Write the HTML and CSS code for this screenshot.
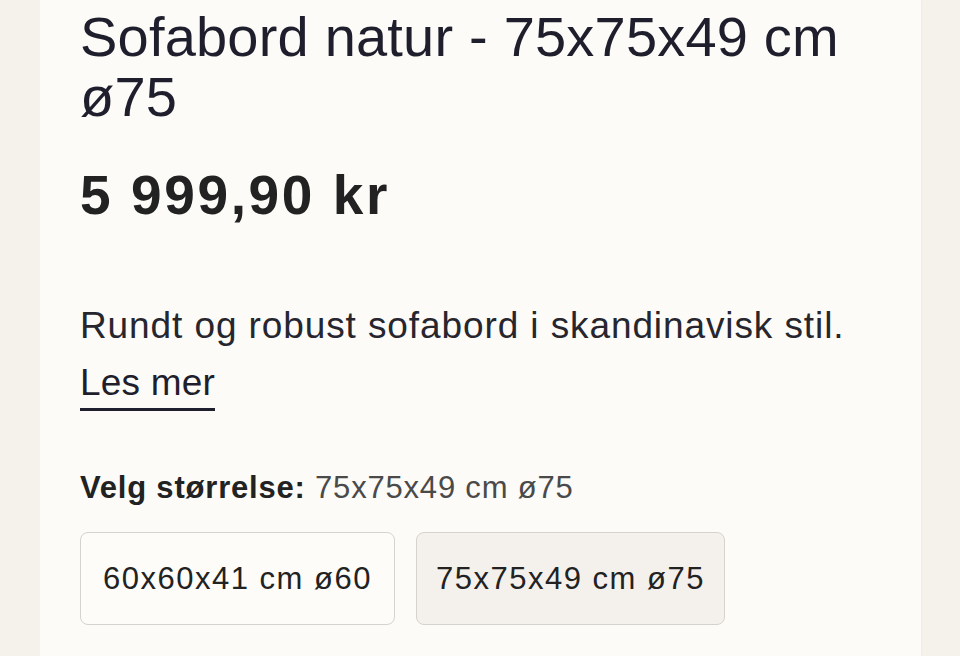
FILE: index.html
```html
<!DOCTYPE html>
<html lang="no">
<head>
<meta charset="utf-8">
<link rel="stylesheet" href="styles.css">
</head>
<body>
<div class="page">
  <main class="panel">
    <h1 class="title">Sofabord natur - 75x75x49 cm ø75</h1>
    <div class="price">5 999,90 kr</div>
    <p class="desc">Rundt og robust sofabord i skandinavisk stil.</p>
    <a class="more" href="#">Les mer</a>
    <div class="size-label"><span class="lbl">Velg størrelse:</span> <span class="val">75x75x49 cm ø75</span></div>
    <div class="sizes">
      <button class="size">60x60x41 cm ø60</button>
      <button class="size selected">75x75x49 cm ø75</button>
    </div>
  </main>
</div>
</body>
</html>
```
FILE: styles.css
```css
html, body { margin: 0; padding: 0; }
body {
  background: #f5f1eb;
  font-family: "Liberation Sans", Arial, sans-serif;
  color: #1f1e2c;
  height: 656px;
  overflow: hidden;
}
.page { display: flex; padding-left: 40px; height: 656px; }
.panel {
  width: 801px;
  background: #fcfbf7;
  padding: 0 40px;
  box-shadow: 1px 0 2px rgba(0,0,0,0.03);
}
.title {
  margin: 0;
  padding-top: 7px;
  font-weight: 400;
  font-size: 56px;
  line-height: 60px;
  letter-spacing: 0.2px;
  width: 790px;
}
.price {
  margin-top: 38px;
  font-weight: 700;
  font-size: 55px;
  line-height: 60px;
  color: #222;
  letter-spacing: 2.6px;
}
.desc {
  margin: 71px 0 0;
  font-size: 37px;
  line-height: 60px;
  letter-spacing: 0.9px;
  color: #27262f;
}
.more {
  display: inline-block;
  font-size: 37px;
  line-height: 50px;
  margin-top: 2px;
  color: #1f1e2c;
  text-decoration: none;
  border-bottom: 3px solid #1f1e2c;
  letter-spacing: 0.2px;
}
.size-label {
  margin-top: 57px;
  font-size: 31px;
  line-height: 40px;
  letter-spacing: 0.8px;
}
.lbl { font-weight: 700; color: #222; }
.val { color: #4a4a4a; }
.sizes { display: flex; gap: 21px; margin-top: 24px; }
.size {
  width: 315px;
  height: 93px;
  font-family: inherit;
  font-size: 31px;
  color: #222;
  background: #fdfcf9;
  border: 1.5px solid #d6d3ce;
  border-radius: 8px;
  letter-spacing: 1.5px;
  padding: 0;
}
.size.selected { width: 309px; background: #f4f1ec; }
```
